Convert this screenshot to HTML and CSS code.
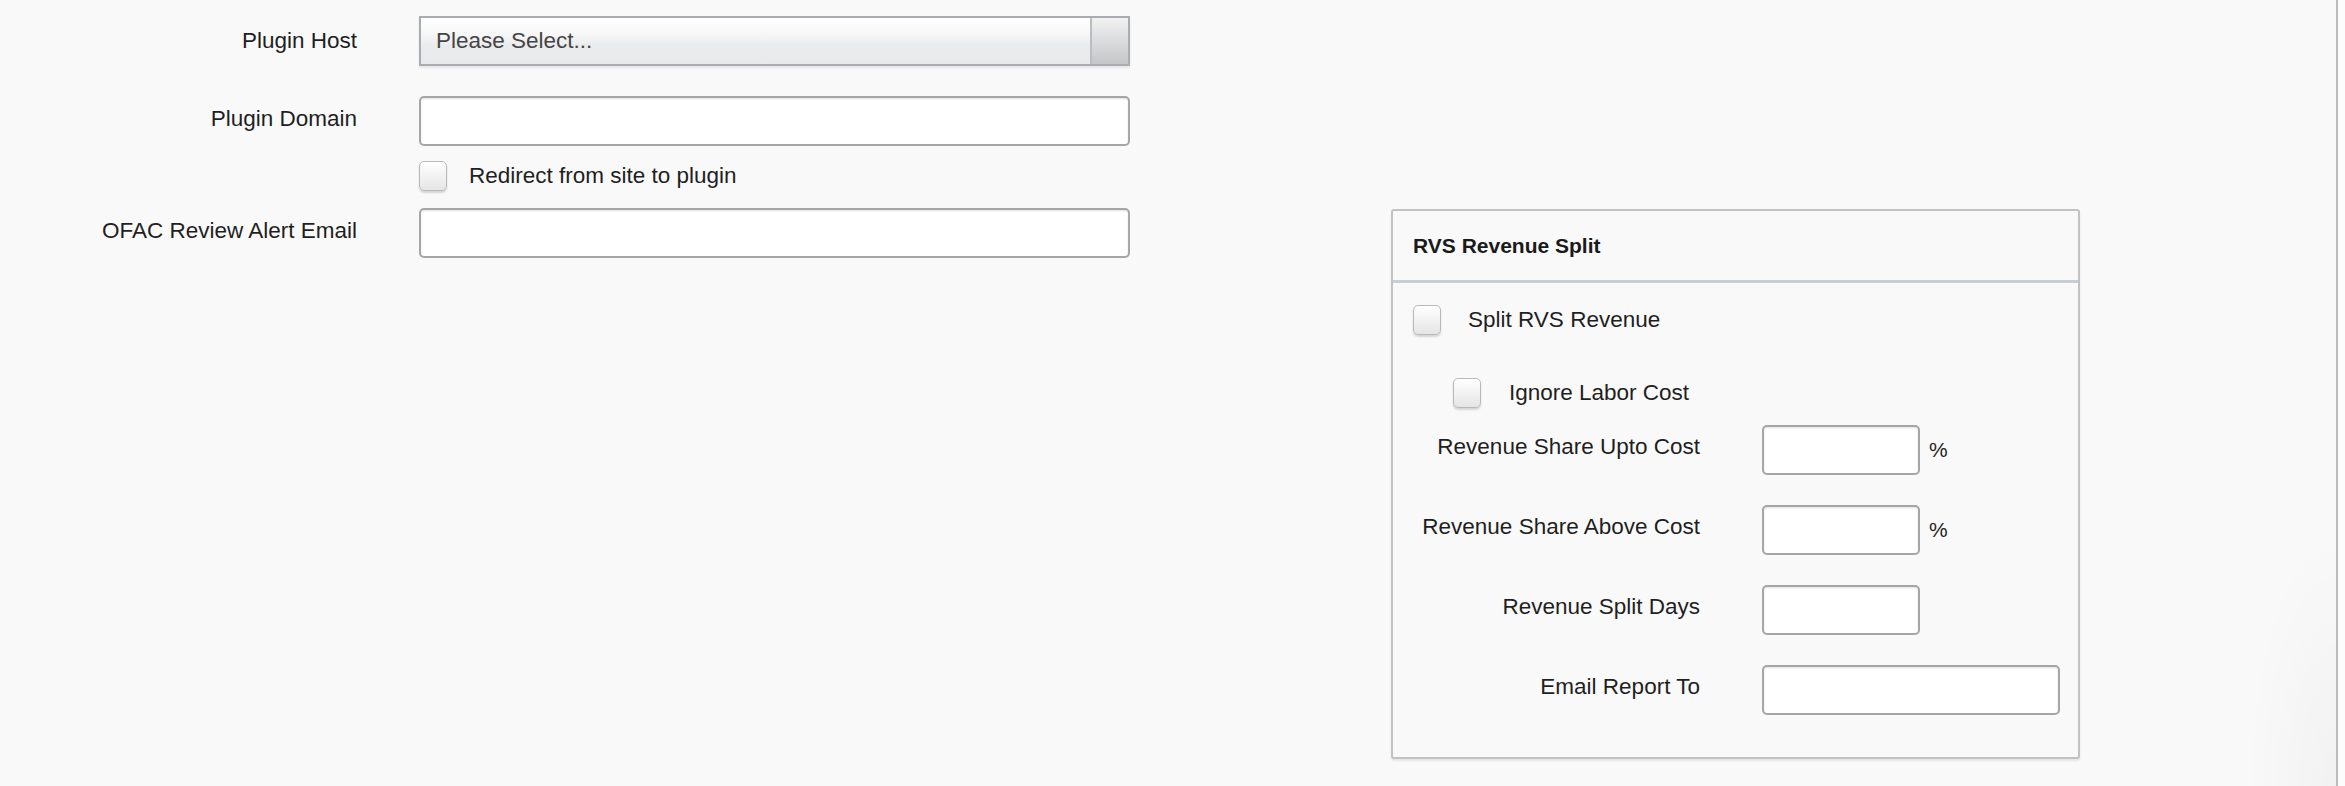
FILE: index.html
```html
<!DOCTYPE html>
<html lang="en">
<head>
<meta charset="utf-8">
<title>Plugin Settings</title>
<link rel="stylesheet" href="styles.css">
</head>
<body>
<div class="page">
  <div class="left-form">
    <div class="row row-select">
      <label class="lbl lbl-select">Plugin Host</label>
      <div class="select"><span class="select-text">Please Select...</span><span class="select-btn"></span></div>
    </div>
    <div class="row row-domain">
      <label class="lbl">Plugin Domain</label>
      <input class="text wide" type="text">
    </div>
    <div class="row row-check">
      <span class="lbl"></span>
      <label class="check check-redirect"><span class="box"></span><span>Redirect from site to plugin</span></label>
    </div>
    <div class="row row-ofac">
      <label class="lbl">OFAC Review Alert Email</label>
      <input class="text wide" type="text">
    </div>
  </div>

  <section class="panel">
    <header class="panel-head">RVS Revenue Split</header>
    <div class="panel-body">
      <label class="check check-split"><span class="box"></span><span>Split RVS Revenue</span></label>
      <label class="check check-ignore"><span class="box"></span><span>Ignore Labor Cost</span></label>
      <div class="prow">
        <label class="plbl">Revenue Share Upto Cost</label>
        <div class="pfield"><input class="text short" type="text"><span class="pct">%</span></div>
      </div>
      <div class="prow">
        <label class="plbl">Revenue Share Above Cost</label>
        <div class="pfield"><input class="text short" type="text"><span class="pct">%</span></div>
      </div>
      <div class="prow">
        <label class="plbl">Revenue Split Days</label>
        <div class="pfield"><input class="text short" type="text"></div>
      </div>
      <div class="prow">
        <label class="plbl">Email Report To</label>
        <div class="pfield"><input class="text email" type="text"></div>
      </div>
    </div>
  </section>
</div>
</body>
</html>
```

FILE: styles.css
```css
html {
  background: #fcfcfc;
}
body {
  margin: 0;
  font-family: "Liberation Sans", Arial, sans-serif;
  font-size: 22.5px;
  color: #1f1f1f;
}
.page {
  width: 2338px;
  min-height: 786px;
  box-sizing: border-box;
  border-right: 2px solid #bcbcbc;
  background:
    radial-gradient(ellipse 90px 260px at 100% 100%, rgba(0,0,0,0.03), rgba(0,0,0,0) 100%),
    #f9f9f9;
  display: flex;
  align-items: flex-start;
  padding-top: 16px;
}
.left-form {
  width: 1130px;
  display: flex;
  flex-direction: column;
}
.row {
  display: grid;
  grid-template-columns: 357px 711px;
  column-gap: 62px;
  align-items: center;
}
.row-domain { margin-top: 30px; }
.row-check { margin-top: 15px; }
.row-ofac { margin-top: 17px; }
.lbl {
  text-align: right;
  position: relative;
  top: -2px;
}
.lbl-select { top: 0; }
.select {
  height: 50px;
  box-sizing: border-box;
  border: 2px solid #a9adb2;
  background: linear-gradient(#ffffff 0%, #f5f5f6 40%, #eaebed 60%, #e8e9eb 100%);
  box-shadow: 0 2px 2px rgba(0,0,0,0.08);
  display: flex;
  align-items: center;
}
.select-text {
  flex: 1;
  padding-left: 15px;
  color: #454545;
}
.select-btn {
  width: 36px;
  align-self: stretch;
  border-left: 2px solid #b9bcc0;
  background: linear-gradient(#f1f1f2, #c5c6c8);
}
.text {
  height: 50px;
  box-sizing: border-box;
  margin: 0;
  border: 2px solid #a6a6a6;
  border-radius: 5px;
  background: #ffffff;
  box-shadow: inset 0 1px 2px rgba(0,0,0,0.12);
  font: inherit;
  padding: 0 10px;
  outline: none;
}
.wide { width: 711px; }
.short { width: 158px; }
.email { width: 298px; }
.check {
  display: flex;
  align-items: center;
  height: 30px;
}
.box {
  width: 28px;
  height: 30px;
  box-sizing: border-box;
  border: 1px solid #b9b9b9;
  border-radius: 5px;
  background: linear-gradient(#ffffff, #e5e5e5);
  box-shadow: 0 2px 2px rgba(0,0,0,0.14);
  flex: none;
}
.check-redirect .box { margin-right: 22px; }
.check-split .box { margin-right: 27px; }
.check-ignore .box { margin-right: 28px; }

.panel {
  margin-left: 261px;
  margin-top: 193px;
  width: 689px;
  box-sizing: border-box;
  border: 2px solid #c2c2c2;
  border-radius: 3px;
  box-shadow: 0 2px 2px rgba(0,0,0,0.08);
  background: #f9f9f9;
}
.panel-head {
  height: 72px;
  box-sizing: border-box;
  border-bottom: 3px solid #c7ced5;
  padding-left: 20px;
  display: flex;
  align-items: center;
  font-weight: bold;
  font-size: 21px;
  color: #1a1a1a;
}
.panel-body {
  padding: 22px 20px 42px 20px;
  display: flex;
  flex-direction: column;
}
.check-ignore {
  margin-top: 43px;
  margin-left: 40px;
}
.prow {
  display: grid;
  grid-template-columns: 287px auto;
  column-gap: 62px;
  align-items: center;
  margin-top: 30px;
}
.check-ignore + .prow { margin-top: 17px; }
.plbl {
  text-align: right;
  position: relative;
  top: -3px;
}
.pfield {
  display: flex;
  align-items: center;
}
.pct {
  margin-left: 9px;
  font-size: 21px;
}
```
